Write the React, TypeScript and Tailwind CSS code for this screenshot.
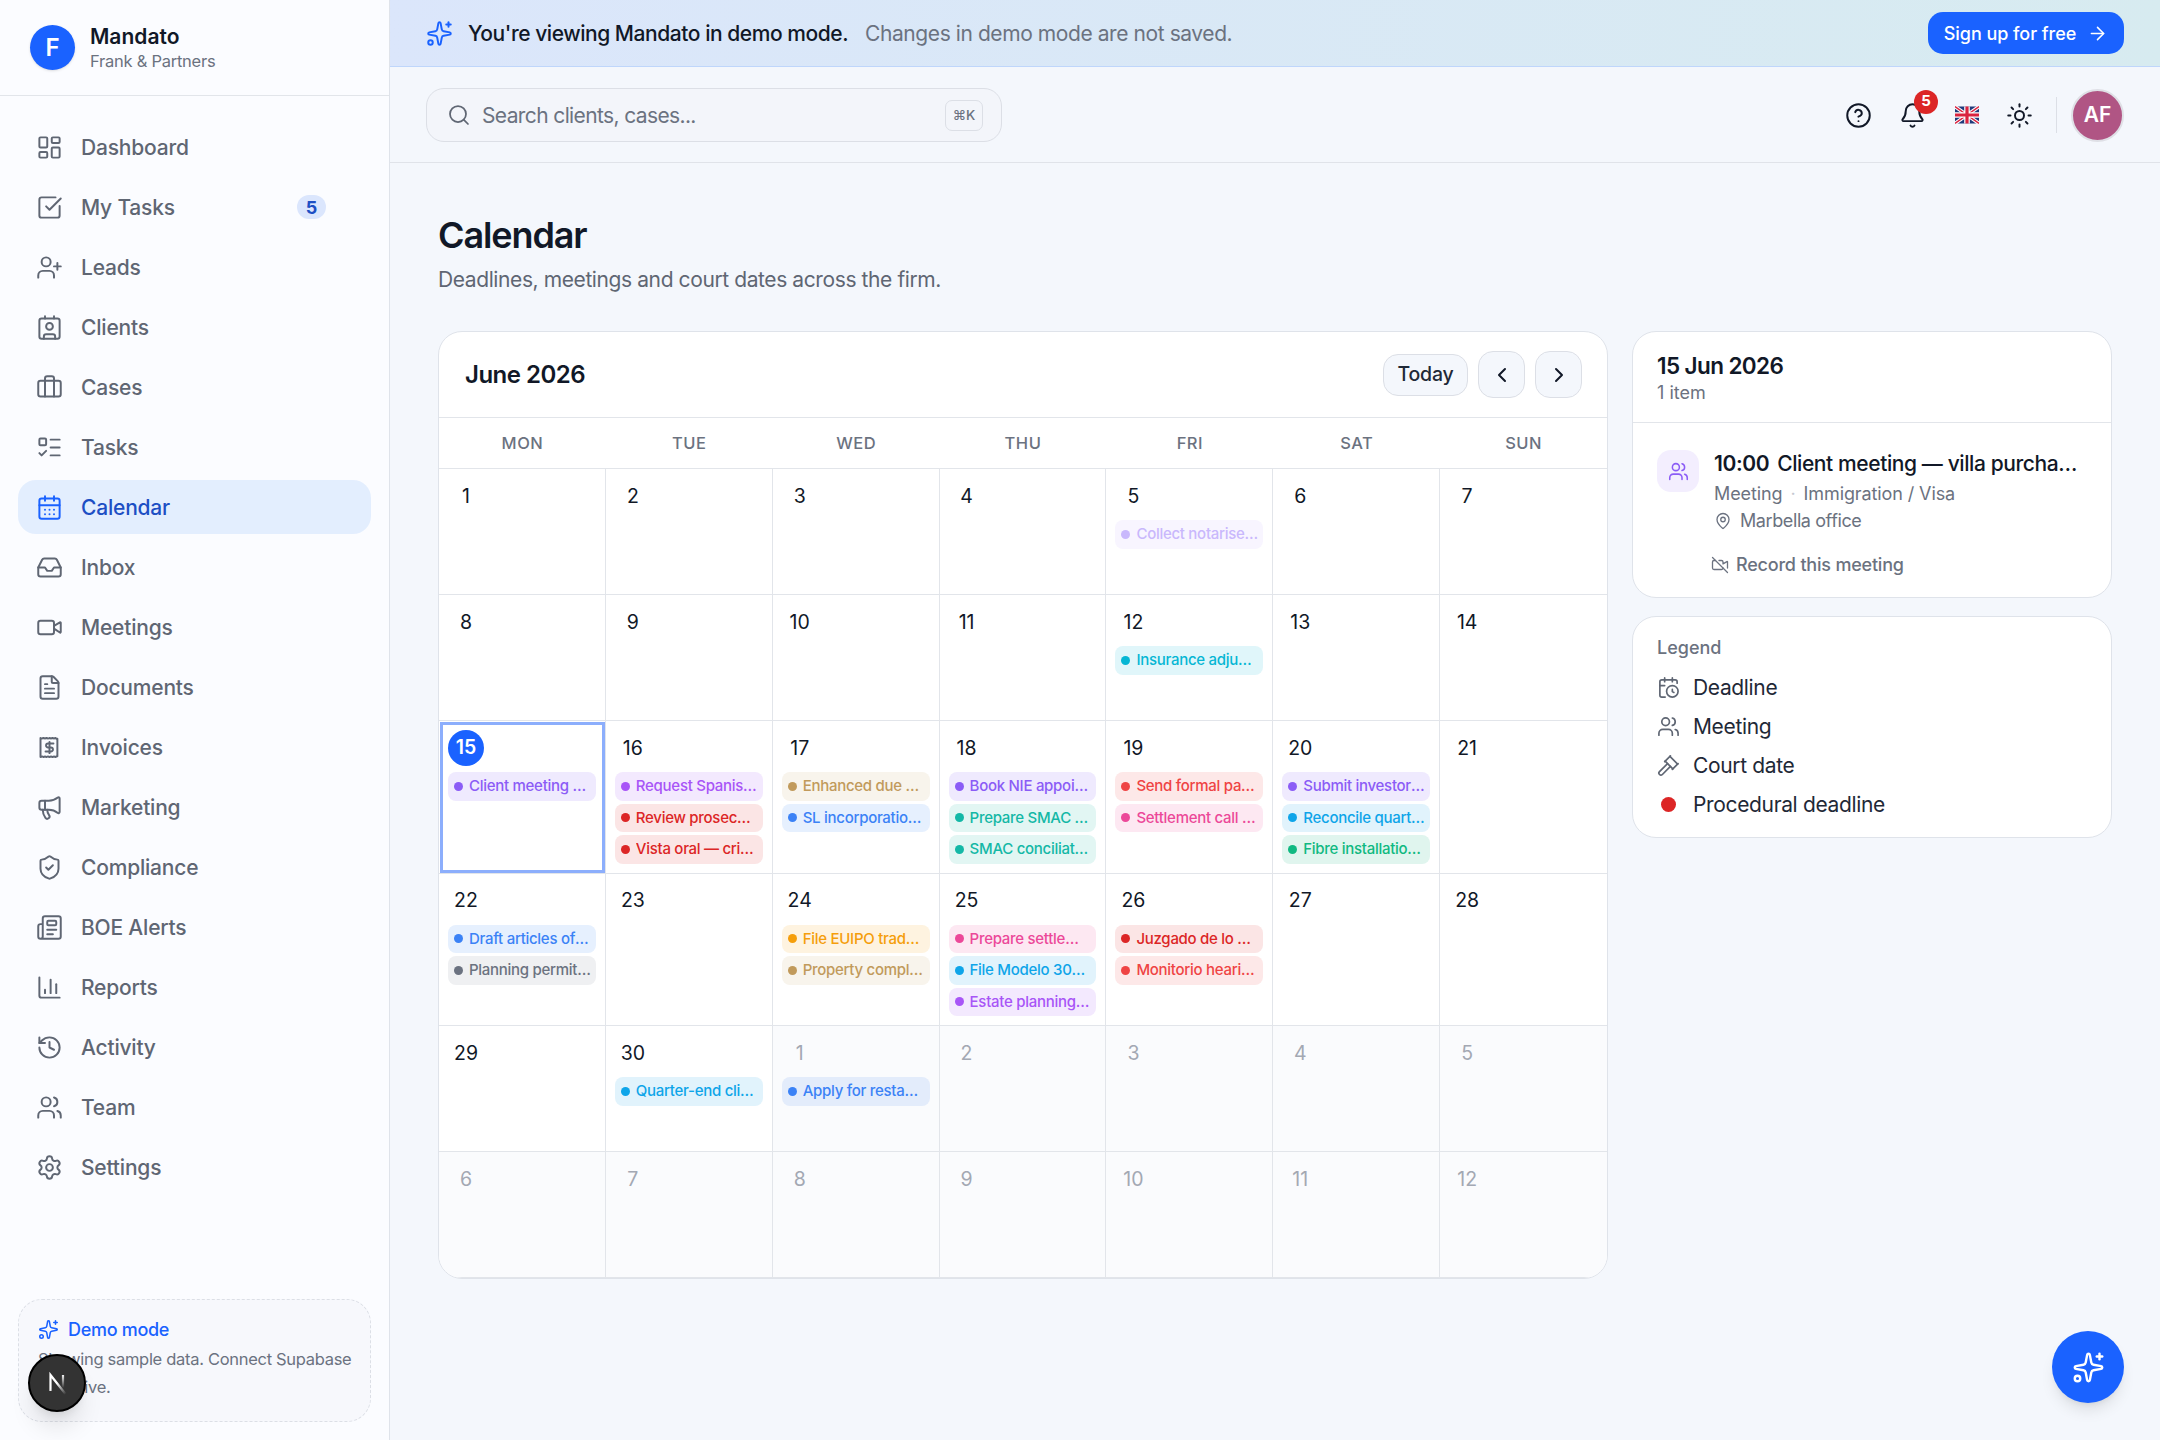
import React from "react";
import {
  LayoutDashboard, SquareCheckBig, UserPlus, Contact, Briefcase, ListTodo, CalendarDays, Inbox, Video, FileText,
  Megaphone, ShieldCheck, Newspaper, ChartColumn, History, Users, Settings, Sparkles, Search, CircleHelp, Bell, Sun,
  ArrowRight, ChevronLeft, ChevronRight, MapPin, VideoOff, CalendarClock, Gavel,
} from "lucide-react";

const ReceiptDollar = ({ size = 27, strokeWidth = 1.75 }: { size?: number; strokeWidth?: number }) => (
  <svg width={size} height={size} viewBox="0 0 24 24" fill="none" stroke="currentColor" strokeWidth={strokeWidth} strokeLinecap="round" strokeLinejoin="round">
    <path d="M4 3.5c1 .8 1.5.8 2.67 0 1.17.8 1.5.8 2.67 0 1.17.8 1.5.8 2.66 0 1.17.8 1.5.8 2.67 0 1.17.8 1.5.8 2.67 0 .6.6 1.1.8 1.66.8v15.4c-.56 0-1.06.2-1.66.8-1.17-.8-1.5-.8-2.67 0-1.17-.8-1.5-.8-2.67 0-1.17-.8-1.5-.8-2.66 0-1.17-.8-1.5-.8-2.67 0-1-.8-1.5-.8-2.67 0V3.5z" />
    <path d="M15.5 8.5H10.7a1.75 1.75 0 0 0 0 3.5h2.6a1.75 1.75 0 0 1 0 3.5H8.500" />
    <path d="M12 7v10" />
  </svg>
);

const NextLogo = () => (
  <svg width="30" height="30" viewBox="0 0 30 30" fill="none">
    <defs>
      <linearGradient id="nA" x1="8" y1="6" x2="25" y2="25" gradientUnits="userSpaceOnUse">
        <stop offset="0.45" stopColor="#ffffff" />
        <stop offset="1" stopColor="#ffffff" stopOpacity="0" />
      </linearGradient>
      <linearGradient id="nB" x1="21" y1="6" x2="21" y2="20" gradientUnits="userSpaceOnUse">
        <stop stopColor="#ffffff" />
        <stop offset="1" stopColor="#ffffff" stopOpacity="0" />
      </linearGradient>
    </defs>
    <path d="M8.500 23V7L23.500 26" stroke="url(#nA)" strokeWidth="2.200" />
    <path d="M21 7V20" stroke="url(#nB)" strokeWidth="2.200" />
  </svg>
);

const nav: [string, any][] = [
  ["Dashboard", LayoutDashboard], ["My Tasks", SquareCheckBig], ["Leads", UserPlus], ["Clients", Contact], ["Cases", Briefcase],
  ["Tasks", ListTodo], ["Calendar", CalendarDays], ["Inbox", Inbox], ["Meetings", Video], ["Documents", FileText],
  ["Invoices", ReceiptDollar], ["Marketing", Megaphone], ["Compliance", ShieldCheck], ["BOE Alerts", Newspaper], ["Reports", ChartColumn],
  ["Activity", History], ["Team", Users], ["Settings", Settings],
];

type Ev = { t: string; c: string; b: string };
const violet = "#8b5cf6", vb = "#efeafe", purple = "#a855f7", pb = "#f3e9fe", red = "#dc2626", rb = "#fbe5e5", tan = "#c19a5b", tb = "#f8f4ec";
const blue = "#3b82f6", bb = "#e6f0fe", teal = "#14b8a6", teb = "#e2f6f3", coral = "#ef4444", cb = "#fde8e8", pink = "#ec4899", pib = "#fde8f2", sky = "#0ea5e9", sb = "#e1f3fc";
const e = (t: string, c: string, b: string): Ev => ({ t, c, b });

const days: { d: number; out?: boolean; today?: boolean; ev?: Ev[] }[] = [
  { d: 1 }, { d: 2 }, { d: 3 }, { d: 4 },
  { d: 5, ev: [e("Collect notarised deed", "#c9b8fc", "#f8f5ff")] }, { d: 6 }, { d: 7 },
  { d: 8 }, { d: 9 }, { d: 10 }, { d: 11 },
  { d: 12, ev: [e("Insurance adjuster call", "#06b6d4", "#e0f6fa")] }, { d: 13 }, { d: 14 },
  { d: 15, today: true, ev: [e("Client meeting — villa purchase", violet, vb)] },
  { d: 16, ev: [e("Request Spanish translation", purple, pb), e("Review prosecutor filing", red, rb), e("Vista oral — criminal case", red, rb)] },
  { d: 17, ev: [e("Enhanced due diligence", tan, tb), e("SL incorporation filing", blue, bb)] },
  { d: 18, ev: [e("Book NIE appointment", violet, vb), e("Prepare SMAC filing", teal, teb), e("SMAC conciliation hearing", teal, teb)] },
  { d: 19, ev: [e("Send formal payment notice", coral, cb), e("Settlement call with insurer", pink, pib)] },
  { d: 20, ev: [e("Submit investor visa", violet, vb), e("Reconcile quarterly accounts", sky, sb), e("Fibre installation visit", "#10b981", "#e0f5ee")] },
  { d: 21 },
  { d: 22, ev: [e("Draft articles of association", blue, bb), e("Planning permit review", "#6b7280", "#eff0f2")] },
  { d: 23 },
  { d: 24, ev: [e("File EUIPO trademark", "#f59e0b", "#fef3e0"), e("Property compliance check", tan, tb)] },
  { d: 25, ev: [e("Prepare settlement offer", pink, pib), e("File Modelo 303 return", sky, sb), e("Estate planning meeting", purple, pb)] },
  { d: 26, ev: [e("Juzgado de lo Social hearing", red, rb), e("Monitorio hearing prep", coral, cb)] },
  { d: 27 }, { d: 28 },
  { d: 29 },
  { d: 30, ev: [e("Quarter-end client report", sky, sb)] },
  { d: 1, out: true, ev: [e("Apply for restaurant licence", blue, "#e3ecfb")] },
  { d: 2, out: true }, { d: 3, out: true }, { d: 4, out: true }, { d: 5, out: true },
  { d: 6, out: true }, { d: 7, out: true }, { d: 8, out: true }, { d: 9, out: true }, { d: 10, out: true }, { d: 11, out: true }, { d: 12, out: true },
];

const UKFlag = () => (
  <svg width="24" height="18" viewBox="0 0 60 42">
    <rect width="60" height="42" fill="#1f3a7a" rx="2" />
    <path d="M0 0L60 42M60 0L0 42" stroke="#fff" strokeWidth="9" />
    <path d="M0 0L60 42M60 0L0 42" stroke="#d9233f" strokeWidth="3.5" />
    <path d="M30 0V42M0 21H60" stroke="#fff" strokeWidth="14" />
    <path d="M30 0V42M0 21H60" stroke="#d9233f" strokeWidth="8" />
  </svg>
);

function Sidebar() {
  return (
    <aside className="flex h-full w-[390px] shrink-0 flex-col border-r border-[#dfe3ea] bg-[#fbfcff]">
      <div className="flex h-[96px] shrink-0 items-center gap-[15px] border-b border-[#e2e5ea] px-[30px]">
        <div className="flex h-[45px] w-[45px] items-center justify-center rounded-full bg-[#1a62ff] text-[24px] font-semibold text-white shadow-sm">F</div>
        <div className="flex flex-col">
          <span className="text-[21px] leading-[27px] font-semibold text-[#111827]">Mandato</span>
          <span className="text-[16.5px] leading-[22px] tracking-[-0.25px] text-[#6b7280]">Frank &amp; Partners</span>
        </div>
      </div>
      <nav className="flex flex-col gap-[6px] px-[18px] pt-[24px]">
        {nav.map(([label, Icon]) => {
          const active = label === "Calendar";
          return (
            <div key={label} className={`flex h-[54px] items-center gap-[18px] rounded-[18px] px-[18px] text-[21px] font-medium tracking-[-0.2px] ${active ? "bg-[#e3eefe] text-[#1d4fc4]" : "text-[#5f6673]"}`}>
              <span className={`pt-[1px] ${active ? "text-[#1a62ff]" : "text-[#5f6673]"}`}><Icon size={27} strokeWidth={1.75} /></span>
              <span className="flex-1 pt-[1.5px]">{label}</span>
              {label === "My Tasks" && (
                <span className="mr-[27px] flex h-[24px] w-[29px] items-center justify-center rounded-full bg-[#dbe6fd] text-[18px] font-bold text-[#1d4fc4]">5</span>
              )}
            </div>
          );
        })}
      </nav>
      <div className="mt-auto p-[18px]">
        <div className="h-[123px] rounded-[24px] border border-dashed border-[#dcdfe6] bg-[#f7f8fc] pt-[16px] pr-[10px] pl-[19px]">
          <div className="flex items-center gap-[9px] text-[18px] font-medium tracking-[-0.3px] text-[#1a62ff]">
            <Sparkles size={21} strokeWidth={1.75} />
            <span>Demo mode</span>
          </div>
          <p className="mt-[2px] text-[16.5px] leading-[28px] tracking-[-0.3px] text-[#6b7280]">Showing sample data. Connect Supabase to go live.</p>
        </div>
      </div>
    </aside>
  );
}

function Topbars() {
  return (
    <>
      <div className="flex h-[67px] shrink-0 items-center justify-between border-b border-[#bfd6fb] bg-gradient-to-r from-[#dbe6fb] to-[#d7ebf0] pr-[36px] pl-[36px]">
        <div className="flex items-center">
          <span className="text-[#1a62ff]"><Sparkles size={27} strokeWidth={1.75} /></span>
          <span className="ml-[15px] pt-[1px] text-[21px] font-medium tracking-[-0.45px] text-[#111827]">You're viewing Mandato in demo mode.</span>
          <span className="ml-[17px] pt-[1px] text-[21px] tracking-[-0.42px] text-[#6b7280]">Changes in demo mode are not saved.</span>
        </div>
        <button className="flex h-[42px] w-[196px] items-center justify-center gap-[11px] rounded-[15px] bg-[#1a62ff] text-[18px] font-medium tracking-[-0.05px] text-white">
          Sign up for free <ArrowRight size={21} strokeWidth={1.75} />
        </button>
      </div>
      <div className="flex h-[96px] shrink-0 items-center justify-between border-b border-[#e0e3e9] pt-[1px] pr-[36px] pl-[36px]">
        <div className="flex h-[54px] w-[576px] items-center rounded-[18px] border border-[#dcdfe6] bg-[#f3f5fa] pr-[18px] pl-[20px]">
          <Search size={24} strokeWidth={1.75} className="text-[#5f6673]" />
          <span className="ml-[11px] flex-1 pt-[1px] text-[21px] tracking-[-0.62px] text-[#6b7280]">Search clients, cases...</span>
          <span className="flex h-[31px] w-[38px] items-center justify-center rounded-[7px] border border-[#dcdfe6] text-[13.5px] font-medium text-[#6b7280]">⌘K</span>
        </div>
        <div className="flex items-center text-[#111827]">
          <CircleHelp size={27} strokeWidth={1.75} />
          <div className="relative ml-[27px]">
            <Bell size={27} strokeWidth={1.75} />
            <span className="absolute top-[-12px] left-[15px] flex h-[24px] w-[24px] items-center justify-center rounded-full bg-[#dc2626] text-[15px] font-bold text-white">5</span>
          </div>
          <div className="ml-[29px] flex"><UKFlag /></div>
          <div className="ml-[27px] flex"><Sun size={27} strokeWidth={1.75} /></div>
          <div className="ml-[23px] h-[36px] w-px bg-[#dcdfe6]" />
          <div className="ml-[14px] flex h-[53px] w-[53px] items-center justify-center rounded-full border-2 border-[#dfe0e6] bg-[#b05584] text-[21px] font-semibold text-white">AF</div>
        </div>
      </div>
    </>
  );
}

function Calendar() {
  return (
    <div className="w-[1170px] shrink-0 overflow-hidden rounded-[24px] border border-[#dfe3ea] bg-white">
      <div className="flex h-[86px] items-center justify-between border-b border-[#e2e5ea] pr-[25px] pl-[26px]">
        <span className="text-[24px] font-semibold tracking-[-0.5px] text-[#111827]">June 2026</span>
        <div className="flex items-center gap-[10px]">
          <button className="flex h-[42px] w-[85px] items-center justify-center rounded-[15px] border border-[#dcdfe6] bg-[#f4f7fc] text-[19.5px] font-medium tracking-[-0.2px] text-[#1f2937]">Today</button>
          <button className="flex h-[47px] w-[47px] items-center justify-center rounded-[15px] border border-[#dcdfe6] bg-[#f4f7fc] text-[#111827]"><ChevronLeft size={24} strokeWidth={2} /></button>
          <button className="flex h-[47px] w-[47px] items-center justify-center rounded-[15px] border border-[#dcdfe6] bg-[#f4f7fc] text-[#111827]"><ChevronRight size={24} strokeWidth={2} /></button>
        </div>
      </div>
      <div className="grid h-[51px] grid-cols-7 border-b border-[#e2e5ea]">
        {["MON", "TUE", "WED", "THU", "FRI", "SAT", "SUN"].map((d) => (
          <div key={d} className="flex items-center justify-center text-[16.5px] font-medium tracking-[0.5px] text-[#6b7280]">{d}</div>
        ))}
      </div>
      <div className="grid grid-cols-7">
        {days.map((c, i) => (
          <div key={i} className={`relative min-h-[126px] min-w-0 border-b border-[#e2e5ea] p-[9px] ${i % 7 !== 6 ? "border-r" : ""} ${c.out ? "bg-[#fafbfd]" : "bg-white"} ${c.today ? "outline-[3px] -outline-offset-[4px] outline-[#8caefc]" : ""}`}>
            <div className={`mb-[6px] flex h-[36px] w-[36px] items-center justify-center rounded-full text-[19.5px] ${c.today ? "bg-[#1a62ff] font-semibold text-white" : c.out ? "pt-[1px] text-[#a3a8b3]" : "pt-[1px] font-normal text-[#111827]"}`}>{c.d}</div>
            <div className="flex flex-col gap-[3px]">
              {c.ev?.map((ev) => (
                <div key={ev.t} className="flex h-[28.5px] min-w-0 items-center gap-[6px] rounded-[8px] pr-[5px] pl-[6px] text-[15px] font-medium tracking-[-0.28px]" style={{ backgroundColor: ev.b, color: ev.c }}>
                  <span className="h-[9px] w-[9px] shrink-0 rounded-full" style={{ backgroundColor: ev.c }} />
                  <span className="truncate">{ev.t}</span>
                </div>
              ))}
            </div>
          </div>
        ))}
      </div>
    </div>
  );
}

function Side() {
  return (
    <div className="flex w-[480px] shrink-0 flex-col gap-[18px]">
      <div className="h-[267px] rounded-[24px] border border-[#dfe3ea] bg-white">
        <div className="h-[91px] border-b border-[#e2e5ea] px-[24px] pt-[19px]">
          <div className="text-[22.5px] leading-[30px] font-semibold tracking-[-0.6px] text-[#111827]">15 Jun 2026</div>
          <div className="text-[18px] leading-[24px] text-[#6b7280]">1 item</div>
        </div>
        <div className="flex gap-[15px] px-[24px] pt-[27px]">
          <div className="flex h-[42px] w-[42px] shrink-0 items-center justify-center rounded-[14px] bg-[#f3eefe] text-[#8b5cf6]"><Users size={21} strokeWidth={1.75} /></div>
          <div className="min-w-0 flex-1">
            <div className="flex h-[27px] items-center gap-[8px] text-[21px] font-medium tracking-[-0.4px] text-[#111827]">
              <span className="font-semibold">10:00</span>
              <span className="truncate">Client meeting — villa purchase in Marbella</span>
            </div>
            <div className="mt-[3px] flex h-[27px] items-center text-[18px] tracking-[-0.1px] text-[#6b7280]">Meeting<span className="mx-[8px] text-[#c5c9d1]">·</span>Immigration / Visa</div>
            <div className="flex h-[27px] items-center gap-[8px] text-[18px] tracking-[-0.4px] text-[#6b7280]"><MapPin size={18} strokeWidth={1.75} />Marbella office</div>
            <div className="mt-[17px] -ml-[3px] flex h-[27px] items-center gap-[7px] text-[18px] font-medium tracking-[-0.2px] text-[#6b7280]"><VideoOff size={18} strokeWidth={1.75} />Record this meeting</div>
          </div>
        </div>
      </div>
      <div className="h-[222px] rounded-[24px] border border-[#dfe3ea] bg-white px-[24px] pt-[17px]">
        <div className="mb-[7px] text-[18px] leading-[27px] font-medium text-[#6b7280]">Legend</div>
        {([["Deadline", CalendarClock], ["Meeting", Users], ["Court date", Gavel]] as [string, any][]).map(([l, I]) => (
          <div key={l} className="flex h-[39px] items-center gap-[13px] text-[21px] tracking-[-0.35px] text-[#1f2937]">
            <span className="text-[#5f6673]"><I size={23} strokeWidth={1.75} /></span>{l}
          </div>
        ))}
        <div className="flex h-[39px] items-center gap-[13px] text-[21px] tracking-[-0.35px] text-[#1f2937]">
          <span className="flex w-[23px] justify-center"><span className="h-[15px] w-[15px] rounded-full bg-[#dc2626]" /></span>Procedural deadline
        </div>
      </div>
    </div>
  );
}

export default function App() {
  return (
    <div className="relative flex h-screen w-full overflow-hidden bg-[#f4f7fc]" style={{ fontFamily: "Inter, 'Liberation Sans', sans-serif" }}>
      <Sidebar />
      <div className="flex min-w-0 flex-1 flex-col">
        <Topbars />
        <main className="flex-1 px-[48px] pt-[48px]">
          <h1 className="text-[36px] leading-[48px] font-semibold tracking-[-1.1px] text-[#111827]">Calendar</h1>
          <p className="mt-[5px] text-[21px] leading-[32px] tracking-[-0.4px] text-[#5f6673]">Deadlines, meetings and court dates across the firm.</p>
          <div className="mt-[35px] flex items-start gap-[24px]">
            <Calendar />
            <Side />
          </div>
        </main>
      </div>
      <div className="absolute top-[1331px] left-[2052px] flex h-[72px] w-[72px] items-center justify-center rounded-full bg-[#1a62ff] text-white shadow-lg">
        <Sparkles size={33} strokeWidth={1.75} />
      </div>
      <div className="absolute top-[1354px] left-[28px] flex h-[58px] w-[58px] items-center justify-center rounded-full border-2 border-black bg-[#333333] shadow-xl">
        <NextLogo />
      </div>
    </div>
  );
}
